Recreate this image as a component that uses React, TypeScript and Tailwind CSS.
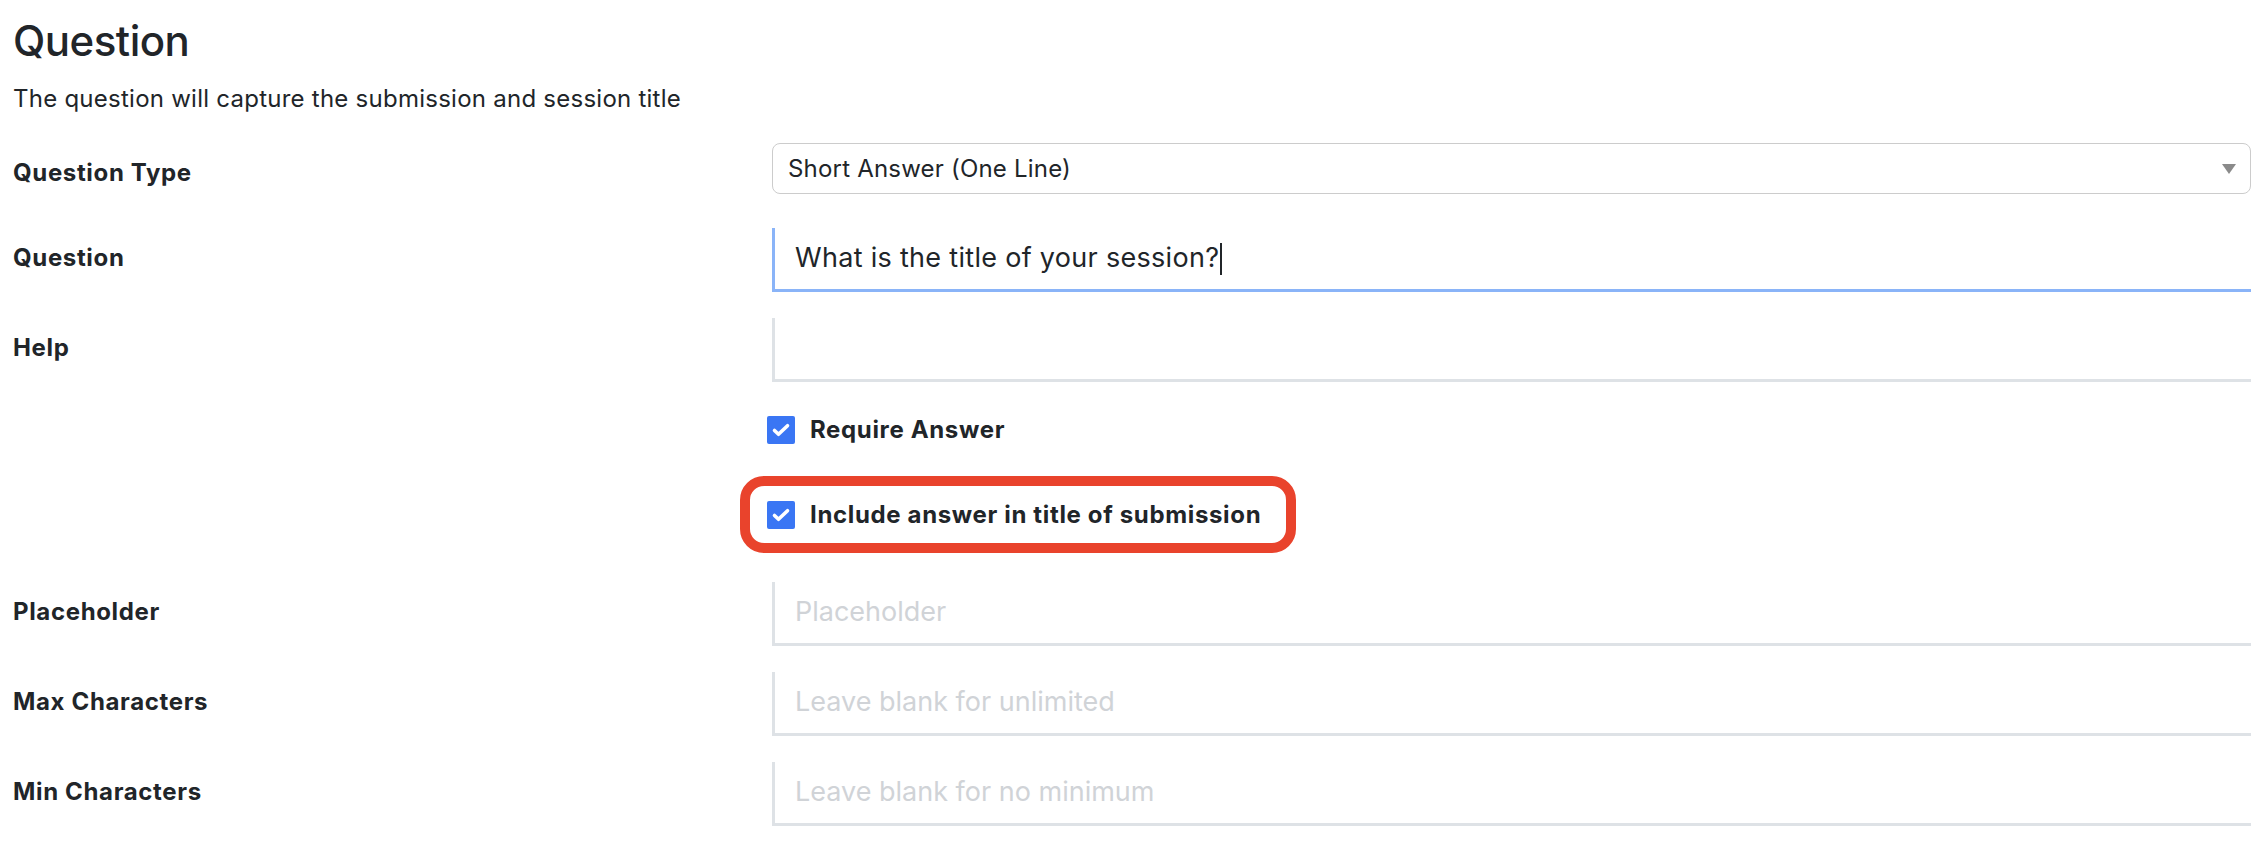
import { ReactNode } from "react"

function CheckBox() {
  return (
    <span className="flex h-[28px] w-[28px] shrink-0 items-center justify-center rounded-[2px] bg-[#3a76f4]">
      <svg viewBox="0 0 28 28" className="h-[28px] w-[28px]" fill="none">
        <path d="M7.5 14.5l4 3.8 9-8.6" stroke="#ffffff" strokeWidth="3.6" strokeLinecap="round" strokeLinejoin="round" />
      </svg>
    </span>
  )
}

function FieldRow({ label, children }: { label?: string; children: ReactNode }) {
  return (
    <div className="grid grid-cols-[759px_1fr]">
      <div className="pt-[12px] text-[24px] leading-[36px] font-bold tracking-[0.65px]">{label}</div>
      <div>{children}</div>
    </div>
  )
}

function LineInput({ placeholder, value }: { placeholder?: string; value?: string }) {
  return (
    <div className="flex h-[64px] items-center border-b-[3px] border-l-[3px] border-[#dee2e6] pl-[20px] text-[27px]">
      {value ? (
        <span className="text-[#212529]">{value}</span>
      ) : (
        <span className="text-[#d0d3d7]">{placeholder}</span>
      )}
    </div>
  )
}

export default function App() {
  return (
    <div className="min-h-screen bg-white pl-[13px] pr-[17px] pt-[16px] font-['Inter',sans-serif] text-[#212529]">
      <h3 className="text-[42px] leading-[50px] font-medium tracking-[-0.5px]">Question</h3>
      <p className="mt-[15px] text-[24px] leading-[36px] tracking-[0.25px]">
        The question will capture the submission and session title
      </p>

      <div className="mt-[26px]">
        <FieldRow label="Question Type">
          <div className="flex h-[51px] items-center justify-between rounded-[8px] border-[1.5px] border-[#cccccc] pl-[15px] pr-[14px] text-[24px] tracking-[0.2px]">
            <span>Short Answer (One Line)</span>
            <svg viewBox="0 0 14 10" className="h-[10px] w-[14px]">
              <path d="M0 0h14L7 10z" fill="#8a8a8a" />
            </svg>
          </div>
        </FieldRow>
      </div>

      <div className="mt-[34px]">
        <FieldRow label="Question">
          <div className="flex h-[64px] items-center border-b-[3px] border-l-[3px] border-[#8ab4f8] pl-[20px] text-[27px] tracking-[0.3px]">
            <span>What is the title of your session?</span>
            <span className="ml-[1px] h-[32px] w-[2px] bg-[#212529]" />
          </div>
        </FieldRow>
      </div>

      <div className="mt-[26px]">
        <FieldRow label="Help">
          <LineInput />
        </FieldRow>
      </div>

      <div className="mt-[30px] grid grid-cols-[759px_1fr]">
        <div />
        <div className="-ml-[5px] flex flex-col gap-[49px]">
          <label className="flex items-center gap-[15px] text-[24px] leading-[36px] font-bold tracking-[0.65px]">
            <CheckBox />
            Require Answer
          </label>
          <div>
            <label className="relative inline-flex items-center gap-[15px] text-[24px] leading-[36px] font-bold tracking-[0.65px]">
              <CheckBox />
              Include answer in title of submission
              <span className="pointer-events-none absolute -top-[21px] -bottom-[20px] -left-[27px] -right-[35px] rounded-[24px] border-[10px] border-[#e9432c]" />
            </label>
          </div>
        </div>
      </div>

      <div className="mt-[47px] flex flex-col gap-[26px]">
        <FieldRow label="Placeholder">
          <LineInput placeholder="Placeholder" />
        </FieldRow>
        <FieldRow label="Max Characters">
          <LineInput placeholder="Leave blank for unlimited" />
        </FieldRow>
        <FieldRow label="Min Characters">
          <LineInput placeholder="Leave blank for no minimum" />
        </FieldRow>
      </div>
    </div>
  )
}
